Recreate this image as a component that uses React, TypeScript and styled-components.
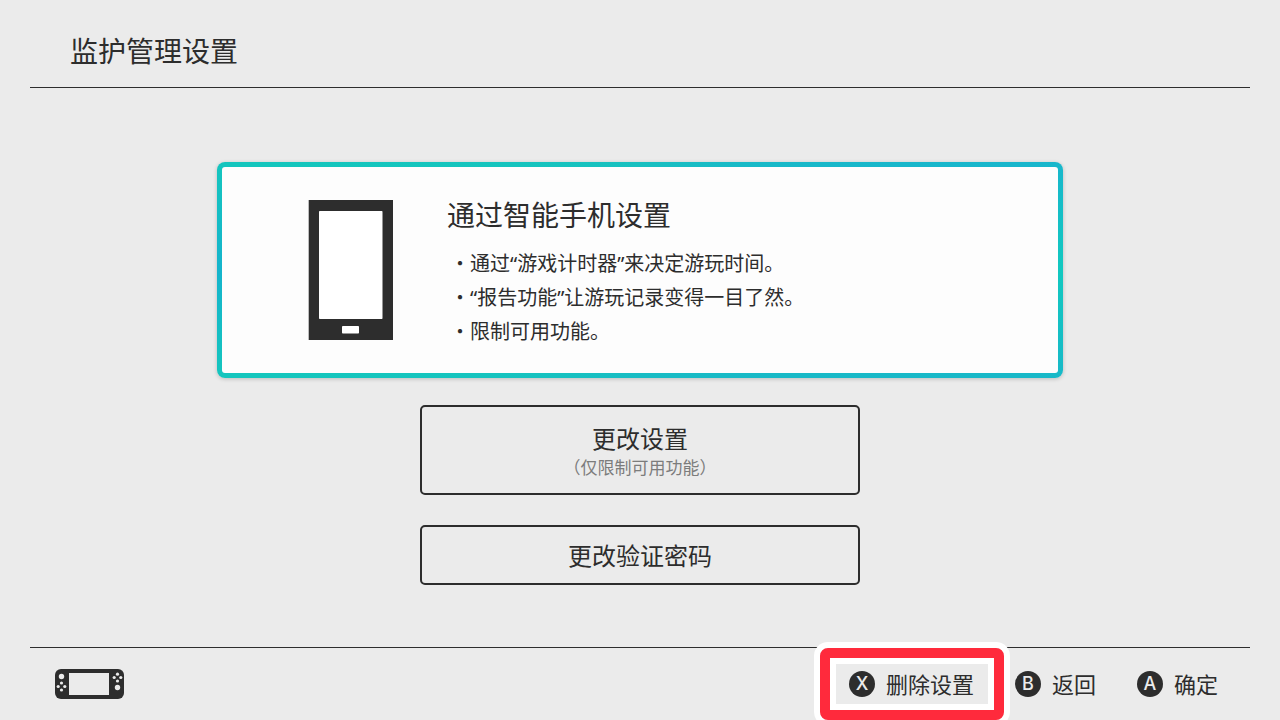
import React from "react";
import styled, { createGlobalStyle } from "styled-components";

const INK = "#2d2d2d";
const PAPER = "#ebebeb";

const GlobalStyle = createGlobalStyle`
  * { box-sizing: border-box; }
  body {
    margin: 0;
    background: ${PAPER};
    color: ${INK};
    font-family: "Noto Sans", "Noto Sans CJK SC", sans-serif;
  }
  button {
    margin: 0;
    padding: 0;
    border: 0;
    background: none;
    color: inherit;
    font: inherit;
    cursor: pointer;
  }
`;

const Page = styled.div`
  display: flex;
  flex-direction: column;
  min-height: 100vh;
  padding: 0 30px;
  overflow: hidden;
`;

const Header = styled.header`
  display: flex;
  align-items: center;
  height: 88px;
  padding: 14px 40px 0;
  border-bottom: 1px solid ${INK};
`;

const PageTitle = styled.h1`
  margin: 0;
  font-size: 28px;
  line-height: 32px;
  font-weight: 400;
`;

const Main = styled.main`
  flex: 1;
  display: flex;
  flex-direction: column;
  align-items: center;
  gap: 30px;
  padding: 77px 0 32px;
`;

const FeatureCard = styled.button`
  display: flex;
  align-items: flex-start;
  gap: 54px;
  width: 100%;
  max-width: 846px;
  margin: -3px 0;
  padding: 33px 86px 24px;
  border: 5px solid transparent;
  border-radius: 8px;
  background:
    linear-gradient(#fdfdfd, #fdfdfd) padding-box,
    conic-gradient(
      #18c0c0 0deg,
      #18b6cc 75deg,
      #12c8c0 90deg,
      #18b8c8 105deg,
      #18bcc4 180deg,
      #14c6bd 255deg,
      #14b4cc 270deg,
      #14c6bd 285deg,
      #18c0c0 360deg
    ) border-box;
  box-shadow: 0 1px 4px rgba(0, 0, 0, 0.2);
  text-align: left;
`;

const PhoneIcon = styled.svg`
  flex: none;
  width: 85px;
  height: 140px;
`;

const CardText = styled.span`
  display: flex;
  flex-direction: column;
  gap: 17px;
`;

const CardTitle = styled.span`
  font-size: 28px;
  line-height: 30px;
`;

const BulletList = styled.span`
  display: flex;
  flex-direction: column;
  padding-left: 3px;
  font-size: 20px;
  line-height: 34px;
`;

const Bullet = styled.span`
  display: flex;
`;

const OptionButton = styled.button<{ $tall?: boolean }>`
  display: flex;
  flex-direction: column;
  align-items: center;
  justify-content: center;
  width: 100%;
  max-width: 440px;
  min-height: ${(p) => (p.$tall ? 90 : 60)}px;
  padding-top: ${(p) => (p.$tall ? 4 : 2)}px;
  border: 2px solid ${INK};
  border-radius: 5px;
`;

const OptionLabel = styled.span`
  font-size: 24px;
  line-height: 32px;
`;

const OptionNote = styled.span`
  color: #7c7c7c;
  font-size: 17px;
  line-height: 26px;
`;

const Footer = styled.footer`
  display: flex;
  align-items: center;
  justify-content: space-between;
  height: 73px;
  padding: 0 18px 0 25px;
  border-top: 1px solid ${INK};
`;

const ConsoleIcon = styled.svg`
  width: 69px;
  height: 30px;
`;

const Actions = styled.nav`
  display: flex;
  gap: 14px;
`;

const Action = styled.button<{ $marked?: boolean }>`
  position: relative;
  display: flex;
  align-items: center;
  gap: 11px;
  height: 40px;
  padding: 0 14px 0 13px;
  font-size: 22px;
  line-height: 32px;
  background: ${(p) => (p.$marked ? PAPER : "none")};

  &::before {
    content: "";
    display: ${(p) => (p.$marked ? "block" : "none")};
    position: absolute;
    inset: -16px;
    border: 10px solid #ff2a3c;
    border-radius: 8px;
    box-shadow: 0 0 0 6px #fff, inset 0 0 0 6px #fff;
  }
`;

const KeyBadge = styled.span`
  display: flex;
  align-items: center;
  justify-content: center;
  width: 26px;
  height: 26px;
  border-radius: 50%;
  background: ${INK};
  color: ${PAPER};
  font-family: Inter, sans-serif;
  font-size: 18px;
  font-weight: 500;
  line-height: 26px;
`;

const bullets = [
  "通过“游戏计时器”来决定游玩时间。",
  "“报告功能”让游玩记录变得一目了然。",
  "限制可用功能。",
];

const actions = [
  { key: "X", label: "删除设置", marked: true },
  { key: "B", label: "返回", marked: false },
  { key: "A", label: "确定", marked: false },
];

export default function App() {
  return (
    <Page lang="zh-CN">
      <GlobalStyle />
      <Header>
        <PageTitle>监护管理设置</PageTitle>
      </Header>

      <Main>
        <FeatureCard type="button">
          <PhoneIcon viewBox="0 0 85 140" aria-hidden="true">
            <rect x="0.7" width="84.3" height="140" fill={INK} />
            <rect x="11" y="11" width="63.5" height="108" rx="0.8" fill="#fff" />
            <rect x="34" y="126" width="17" height="7.5" rx="0.8" fill="#fff" />
          </PhoneIcon>
          <CardText>
            <CardTitle>通过智能手机设置</CardTitle>
            <BulletList>
              {bullets.map((text) => (
                <Bullet key={text}>
                  <span>・</span>
                  <span>{text}</span>
                </Bullet>
              ))}
            </BulletList>
          </CardText>
        </FeatureCard>

        <OptionButton type="button" $tall>
          <OptionLabel>更改设置</OptionLabel>
          <OptionNote>（仅限制可用功能）</OptionNote>
        </OptionButton>
        <OptionButton type="button">
          <OptionLabel>更改验证密码</OptionLabel>
        </OptionButton>
      </Main>

      <Footer>
        <ConsoleIcon viewBox="0 0 69 30" aria-hidden="true">
          <rect width="69" height="30" rx="6" fill={INK} />
          <g fill={PAPER}>
            <rect x="14" y="4" width="40" height="22" />
            <circle cx="6.5" cy="7.5" r="2.7" />
            <circle cx="6.5" cy="14" r="1.6" />
            <circle cx="6.5" cy="21" r="1.6" />
            <circle cx="3.2" cy="17.5" r="1.6" />
            <circle cx="9.8" cy="17.5" r="1.6" />
            <circle cx="62.5" cy="18.5" r="2.7" />
            <circle cx="62.5" cy="5.2" r="1.6" />
            <circle cx="62.5" cy="12" r="1.6" />
            <circle cx="59.2" cy="8.5" r="1.6" />
            <circle cx="65.8" cy="8.5" r="1.6" />
          </g>
        </ConsoleIcon>
        <Actions>
          {actions.map((a) => (
            <Action key={a.key} type="button" $marked={a.marked}>
              <KeyBadge>{a.key}</KeyBadge>
              <span>{a.label}</span>
            </Action>
          ))}
        </Actions>
      </Footer>
    </Page>
  );
}
